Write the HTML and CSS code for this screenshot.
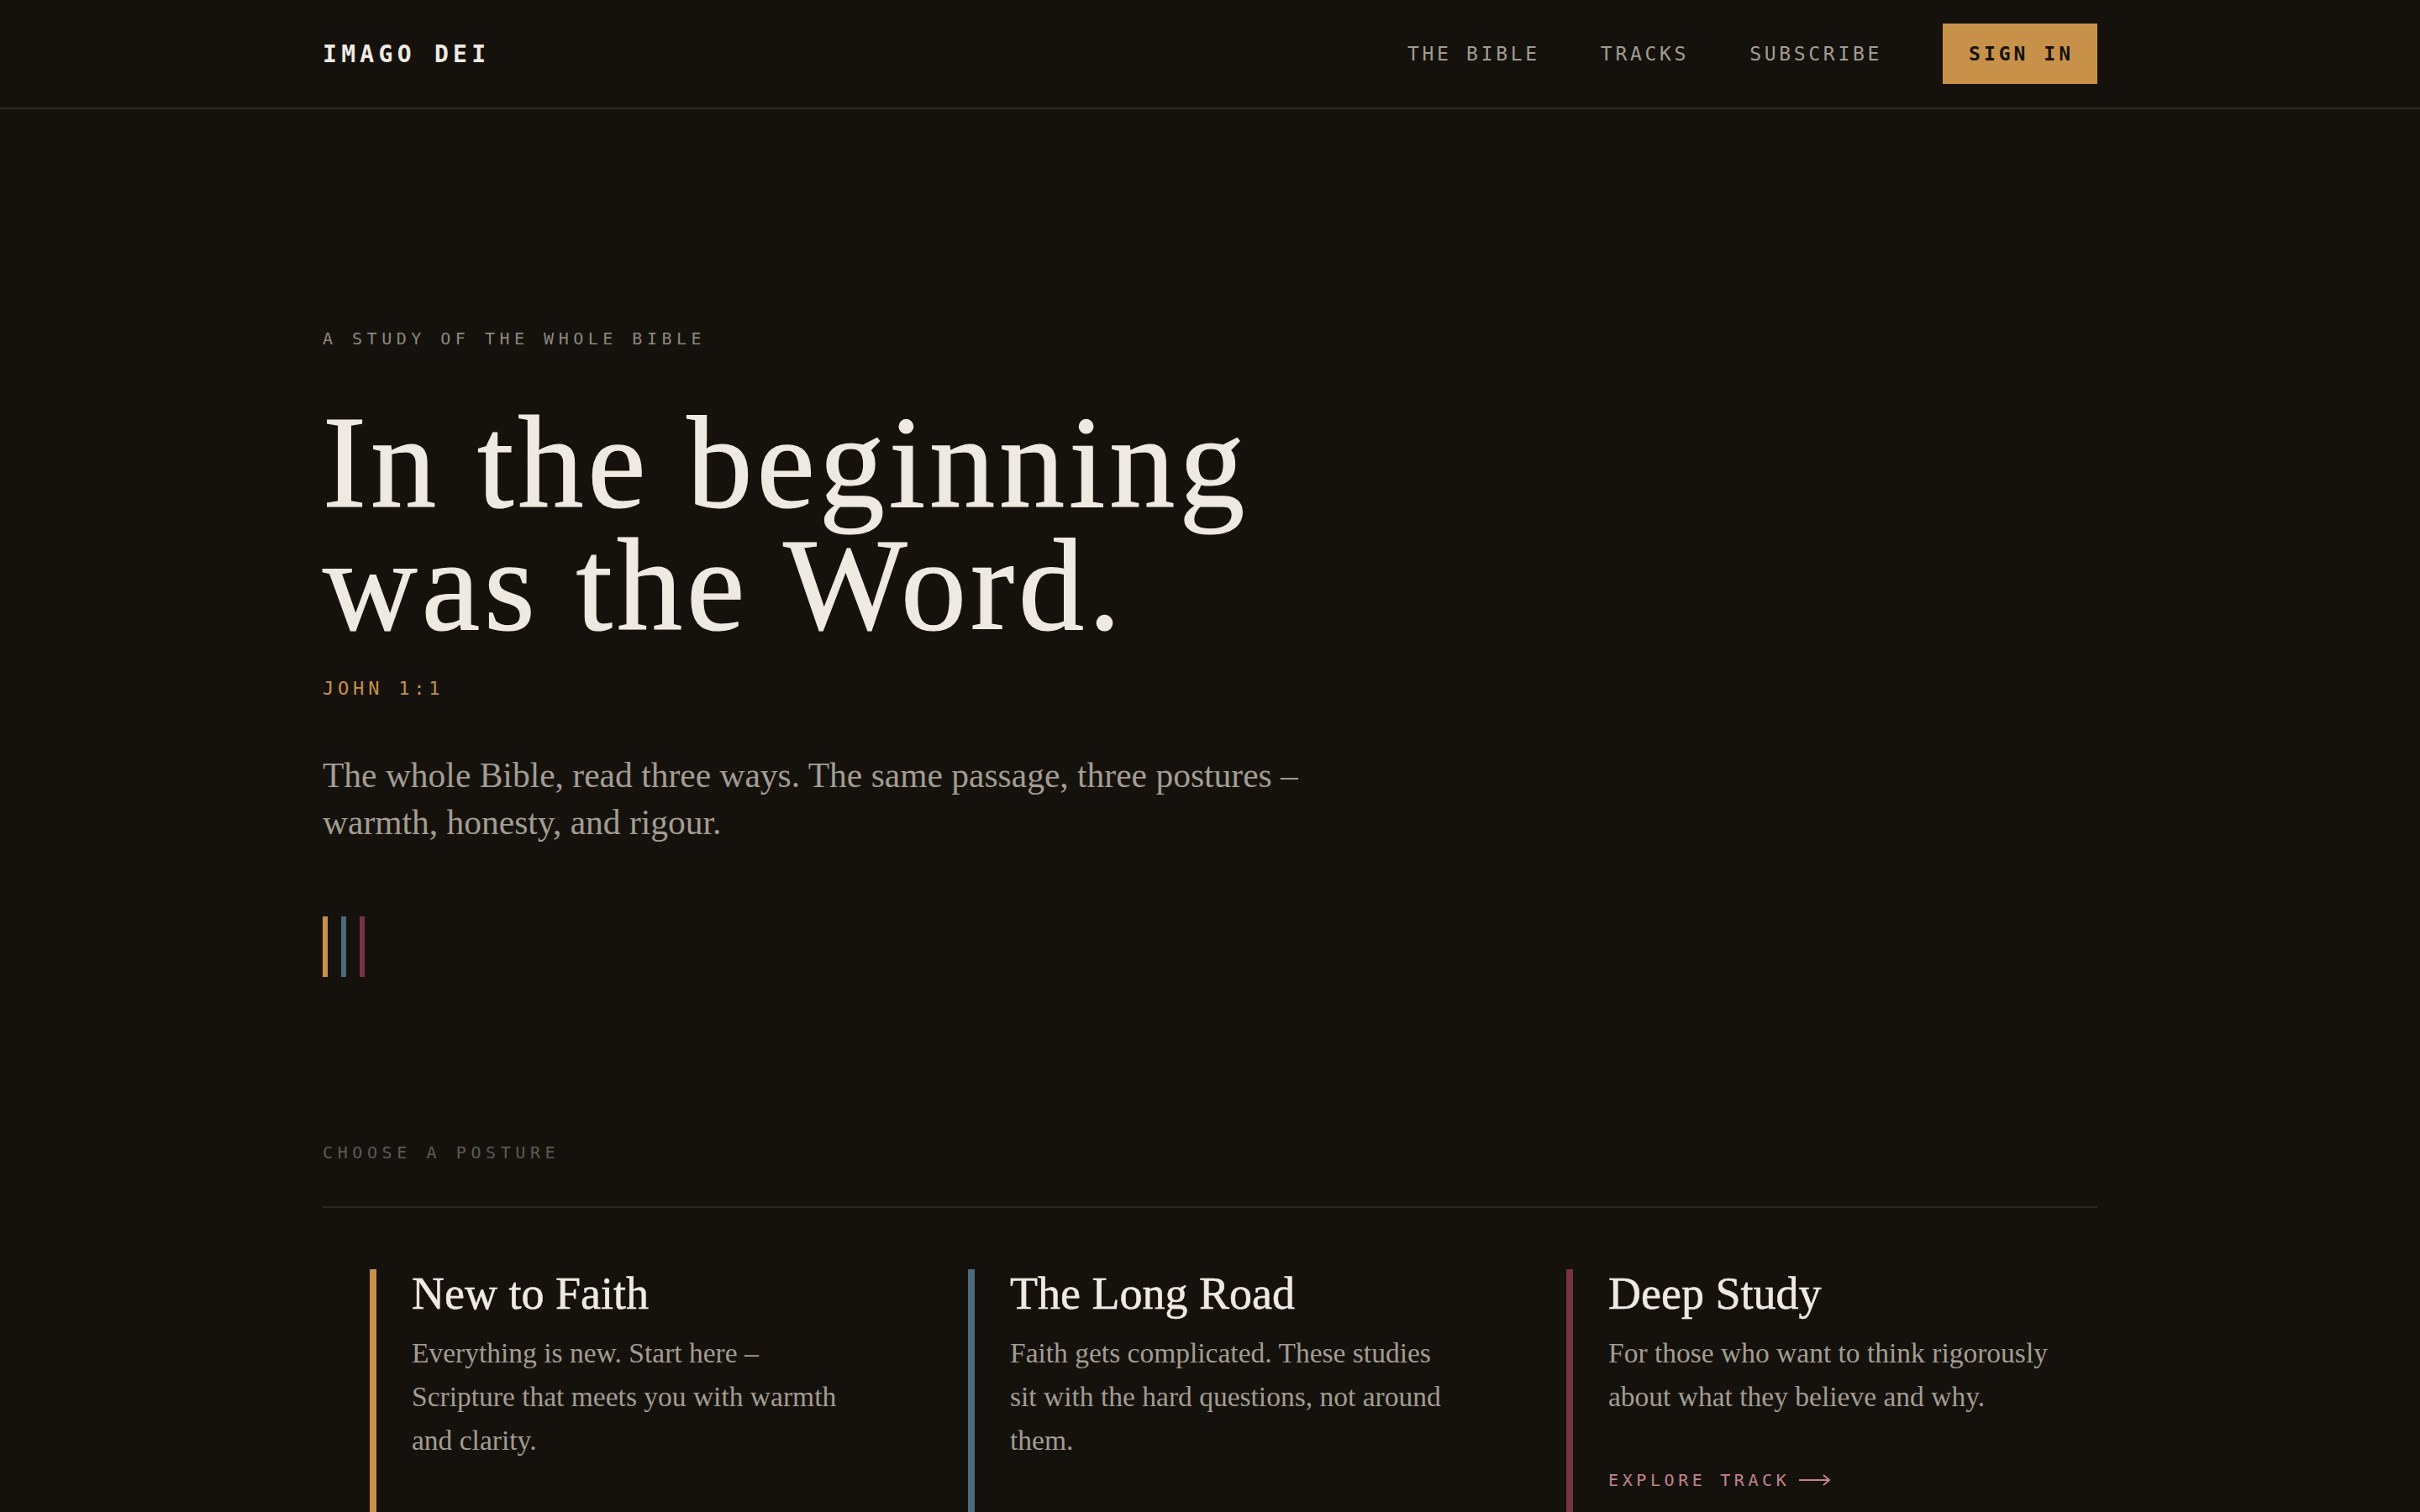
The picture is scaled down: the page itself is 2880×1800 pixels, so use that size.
FILE: index.html
```html
<!DOCTYPE html>
<html lang="en">
<head>
<meta charset="utf-8">
<title>Imago Dei — A study of the whole Bible</title>
<link rel="stylesheet" href="styles.css">
</head>
<body>
<header class="site-header">
  <div class="wrap nav-row">
    <a class="logo" href="#">IMAGO DEI</a>
    <nav class="nav">
      <a class="nav-link" href="#">THE BIBLE</a>
      <a class="nav-link" href="#">TRACKS</a>
      <a class="nav-link" href="#">SUBSCRIBE</a>
      <a class="btn-signin" href="#">SIGN IN</a>
    </nav>
  </div>
</header>

<main class="wrap">
  <section class="hero">
    <p class="eyebrow">A STUDY OF THE WHOLE BIBLE</p>
    <h1 class="headline">In the beginning<br>was the Word.</h1>
    <p class="verse-ref">JOHN 1:1</p>
    <p class="lede">The whole Bible, read three ways. The same passage, three postures – warmth, honesty, and rigour.</p>
    <div class="marks" aria-hidden="true">
      <span class="mark mark-gold"></span>
      <span class="mark mark-slate"></span>
      <span class="mark mark-wine"></span>
    </div>
  </section>

  <section class="postures">
    <p class="section-label">CHOOSE A POSTURE</p>
    <div class="tracks">
      <article class="track track-gold">
        <h2 class="track-title">New to Faith</h2>
        <p class="track-text">Everything is new. Start here – Scripture that meets you with warmth and clarity.</p>
        <a class="track-link" href="#">EXPLORE TRACK
          <svg class="arrow" viewBox="0 0 38 16" width="38" height="16"><path d="M0 8H36M29 2L36 8L29 14" fill="none" stroke="currentColor" stroke-width="2"/></svg>
        </a>
      </article>
      <article class="track track-slate">
        <h2 class="track-title">The Long Road</h2>
        <p class="track-text">Faith gets complicated. These studies sit with the hard questions, not around them.</p>
        <a class="track-link" href="#">EXPLORE TRACK
          <svg class="arrow" viewBox="0 0 38 16" width="38" height="16"><path d="M0 8H36M29 2L36 8L29 14" fill="none" stroke="currentColor" stroke-width="2"/></svg>
        </a>
      </article>
      <article class="track track-wine">
        <h2 class="track-title">Deep Study</h2>
        <p class="track-text">For those who want to think rigorously about what they believe and why.</p>
        <a class="track-link" href="#">EXPLORE TRACK
          <svg class="arrow" viewBox="0 0 38 16" width="38" height="16"><path d="M0 8H36M29 2L36 8L29 14" fill="none" stroke="currentColor" stroke-width="2"/></svg>
        </a>
      </article>
    </div>
  </section>
</main>
</body>
</html>
```

FILE: styles.css
```css
:root {
  --bg: #15120e;
  --rule: #2b2823;
  --cream: #efeae1;
  --muted: #a39c92;
  --dim: #5f5a53;
  --gold: #c8914a;
  --slate: #4e6a78;
  --wine: #763443;
  --serif: "Liberation Serif", "Times New Roman", serif;
  --mono: "DejaVu Sans Mono", "Liberation Mono", monospace;
}

* { box-sizing: border-box; }

html, body {
  margin: 0;
  background: var(--bg);
  color: var(--cream);
}

body {
  font-family: var(--serif);
}

a { color: inherit; text-decoration: none; }

.wrap {
  max-width: 2112px;
  margin: 0 auto;
}

/* Header */
.site-header {
  border-bottom: 2px solid var(--rule);
}

.nav-row {
  height: 128px;
  display: flex;
  align-items: center;
  justify-content: space-between;
}

.logo {
  font-family: var(--mono);
  font-weight: 700;
  font-size: 28px;
  letter-spacing: 5.3px;
  color: var(--cream);
}

.nav {
  display: flex;
  align-items: center;
  gap: 72px;
}

.nav-link {
  font-family: var(--mono);
  font-size: 23px;
  letter-spacing: 3.7px;
  color: var(--muted);
}

.btn-signin {
  display: inline-flex;
  align-items: center;
  height: 72px;
  padding: 0 28px 0 31px;
  background: var(--gold);
  color: #15120e;
  font-family: var(--mono);
  font-weight: 700;
  font-size: 23px;
  letter-spacing: 4px;
}

/* Hero */
.hero {
  padding-top: 258px;
}

.eyebrow {
  margin: 0;
  font-family: var(--mono);
  font-size: 20px;
  line-height: 30px;
  letter-spacing: 5.5px;
  color: #8e877d;
}

.headline {
  margin: 60px 0 0;
  font-family: var(--serif);
  font-weight: 400;
  font-size: 156px;
  line-height: 146px;
  letter-spacing: 0.032em;
  color: var(--cream);
  -webkit-text-stroke: 1.2px var(--cream);
}

.verse-ref {
  margin: 35px 0 0;
  font-family: var(--mono);
  font-size: 22px;
  line-height: 30px;
  letter-spacing: 4.8px;
  color: var(--gold);
}

.lede {
  margin: 60px 0 0;
  max-width: 1220px;
  font-size: 41.5px;
  line-height: 56px;
  color: var(--muted);
}

.marks {
  margin-top: 84px;
  display: flex;
  gap: 16px;
}

.mark {
  width: 6px;
  height: 72px;
}

.mark-gold { background: var(--gold); }
.mark-slate { background: var(--slate); }
.mark-wine { background: var(--wine); }

/* Postures */
.postures {
  padding-top: 194px;
}

.section-label {
  margin: 0;
  padding-bottom: 49px;
  border-bottom: 2px solid var(--rule);
  font-family: var(--mono);
  font-size: 20px;
  line-height: 30px;
  letter-spacing: 5.6px;
  color: var(--dim);
}

.tracks {
  margin-top: 73px;
  padding-left: 56px;
  display: grid;
  grid-template-columns: repeat(3, 592px);
  column-gap: 120px;
}

.track {
  border-left: 8px solid var(--gold);
  padding: 0 16px 40px 42px;
}

.track-gold { border-left-color: var(--gold); }
.track-slate { border-left-color: var(--slate); }
.track-wine { border-left-color: var(--wine); }

.track-title {
  margin: 0;
  font-weight: 400;
  font-size: 54px;
  line-height: 1.1;
  color: var(--cream);
  -webkit-text-stroke: 0.5px var(--cream);
}

.track-text {
  margin: 15px 0 0;
  font-size: 33.5px;
  line-height: 52px;
  color: var(--muted);
}

.track-link {
  margin-top: 58px;
  display: inline-flex;
  align-items: center;
  font-family: var(--mono);
  font-size: 20px;
  line-height: 30px;
  letter-spacing: 4.6px;
}

.track-gold .track-link { color: var(--gold); }
.track-slate .track-link { color: #7e98a5; }
.track-wine .track-link { color: #c4848f; }

.arrow {
  margin-left: 11px;
  display: block;
}
```
